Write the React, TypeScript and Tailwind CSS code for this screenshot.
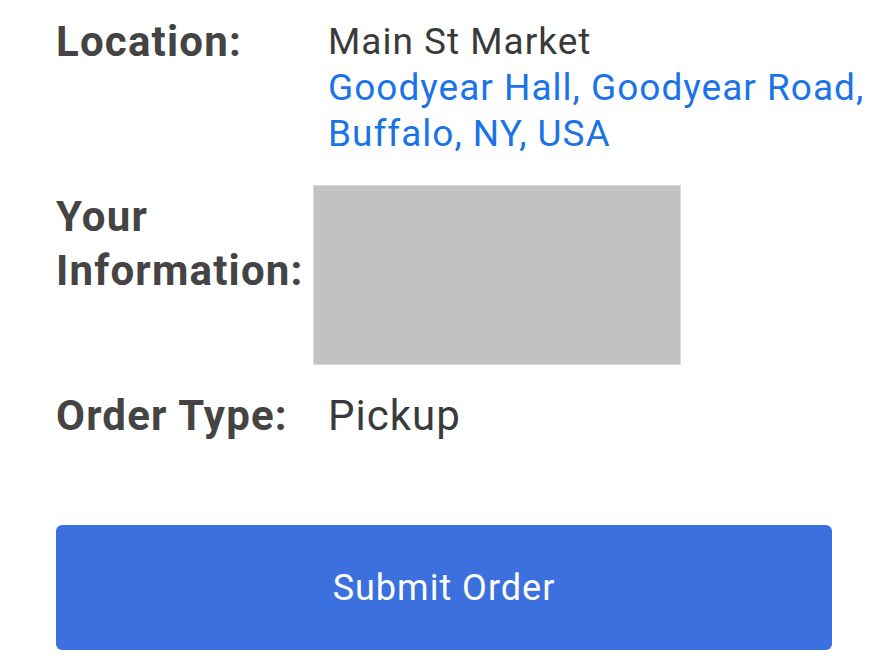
export default function App() {
  return (
    <div
      className="w-[888px] h-[670px] bg-white overflow-hidden pl-[56px] pr-[56px] pt-[20px]"
      style={{ fontFamily: 'Roboto, "Liberation Sans", sans-serif' }}
    >
      <div className="grid grid-cols-[272px_1fr] gap-y-[28px]">
        <div className="text-[42px] leading-[46px] font-bold tracking-[1.2px] text-[#444444] -mt-[1px]">Location:</div>
        <div className="text-[37px] leading-[46px] tracking-[1px] text-[#3a3a3a] whitespace-nowrap -mr-[56px] -mt-[1px]">
          <div>Main St Market</div>
          <div className="text-[#1a73e8]">
            Goodyear Hall, Goodyear Road,
            <br />
            Buffalo, NY, USA
          </div>
        </div>

        <div className="text-[42px] leading-[54px] font-bold tracking-[1.2px] text-[#444444] pt-[5px]">
          Your
          <br />
          Information:
        </div>
        <div className="-ml-[15px]">
          <div className="w-[368px] h-[180px] bg-[#c2c2c2] border border-[#d9d9d9]" />
        </div>

        <div className="text-[42px] leading-[46px] font-bold tracking-[1.2px] text-[#444444]">Order Type:</div>
        <div className="text-[42px] leading-[46px] tracking-[1px] text-[#3a3a3a]">Pickup</div>
      </div>

      <button className="mt-[86px] w-[776px] h-[125px] rounded-[6px] bg-[#3c70de] text-white text-[36px] tracking-[1px]">
        Submit Order
      </button>
    </div>
  );
}
